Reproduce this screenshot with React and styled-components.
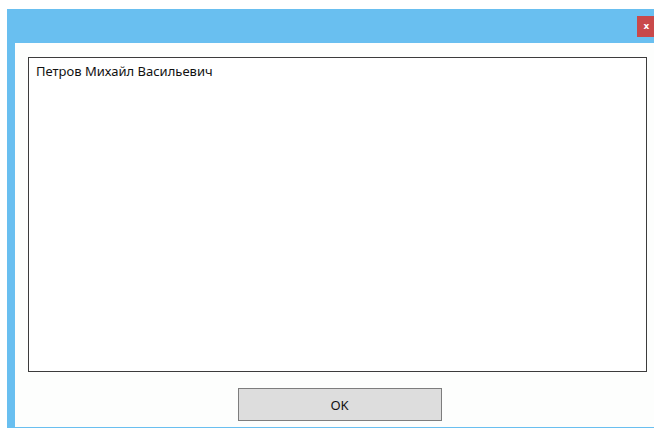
import React from "react";
import styled, { createGlobalStyle } from "styled-components";

const Global = createGlobalStyle`
  html, body { margin: 0; padding: 0; background: #ffffff; }
  body { font-family: "Segoe UI", "Noto Sans", "Open Sans", sans-serif; }
`;

const Page = styled.div`
  padding: 9px 0 0 7px;
  width: 654px;
  height: 429px;
  box-sizing: border-box;
  overflow: hidden;
`;

const Window = styled.div`
  height: 419px;
  background: #69bff0;
  display: flex;
  flex-direction: column;
  padding-bottom: 1px;
  box-sizing: border-box;
`;

const TitleBar = styled.div`
  height: 34px;
  flex: none;
  display: flex;
  justify-content: flex-end;
  align-items: flex-start;
`;

const CloseButton = styled.button`
  margin-top: 7px;
  width: 17px;
  height: 21px;
  padding: 0 0 0 2px;
  border: none;
  background: #c9494a;
  color: #ffffff;
  font: bold 9px "DejaVu Sans", sans-serif;
  line-height: 21px;
  text-align: center;
`;

const Client = styled.div`
  flex: 1;
  margin-left: 8px;
  background: #fdfefd;
  padding: 14px 7px 0 13px;
  display: flex;
  flex-direction: column;
  align-items: center;
  box-sizing: border-box;
`;

const TextBox = styled.div`
  align-self: stretch;
  height: 315px;
  box-sizing: border-box;
  border: 1px solid #3c3c3c;
  background: #ffffff;
  padding: 5px 7px;
  font-size: 13px;
  line-height: 17px;
  color: #111111;
`;

const OkButton = styled.button`
  margin-top: 16px;
  width: 204px;
  height: 33px;
  box-sizing: border-box;
  border: 1px solid #7d7d7d;
  background: #dddddd;
  font-family: "Segoe UI", "Noto Sans", "Open Sans", sans-serif;
  font-size: 13px;
  color: #111111;
  margin-left: 4px;
`;

export default function App() {
  return (
    <>
      <Global />
      <Page>
        <Window>
          <TitleBar>
            <CloseButton>x</CloseButton>
          </TitleBar>
          <Client>
            <TextBox>Петров Михайл Васильевич</TextBox>
            <OkButton>OK</OkButton>
          </Client>
        </Window>
      </Page>
    </>
  );
}
